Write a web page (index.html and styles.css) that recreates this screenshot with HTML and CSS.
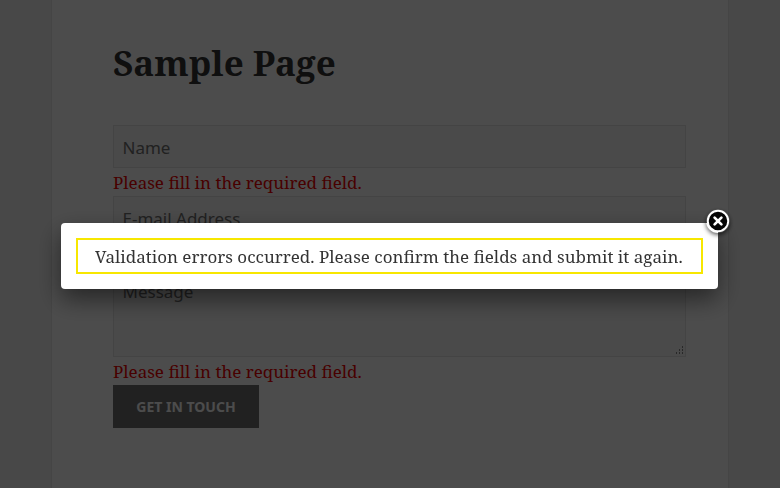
FILE: index.html
```html
<!DOCTYPE html>
<html lang="en">
<head>
<meta charset="utf-8">
<title>Sample Page</title>
<link rel="stylesheet" href="styles.css">
</head>
<body>
<main class="page">
  <h1 class="title">Sample Page</h1>
  <form class="form">
    <input class="field" type="text" placeholder="Name">
    <p class="error">Please fill in the required field.</p>
    <input class="field" type="text" placeholder="E-mail Address">
    <p class="error error-covered"></p>
    <div class="message">
      <textarea class="field area" placeholder="Message"></textarea>
      <svg class="grip" viewBox="0 0 9 9"><path d="M7 1h1M4 4h1M7 4h1M1 7h1M4 7h1M7 7h1" stroke="#888" stroke-width="2"/></svg>
    </div>
    <p class="error">Please fill in the required field.</p>
    <button class="submit" type="button">GET IN TOUCH</button>
  </form>
</main>
<div class="overlay">
  <div class="dialog" role="dialog">
    <p class="notice">Validation errors occurred. Please confirm the fields and submit it again.</p>
    <button class="close" type="button" aria-label="Close">
      <svg viewBox="0 0 24 24"><circle cx="12" cy="12" r="10.2" fill="#050505" stroke="#fff" stroke-width="1.9"/><path d="M8.6 8.6l6.8 6.8M15.4 8.6l-6.8 6.8" stroke="#fff" stroke-width="2.7" stroke-linecap="round"/></svg>
    </button>
  </div>
</div>
</body>
</html>
```
FILE: styles.css
```css
* { box-sizing: border-box; }
body {
  margin: 0;
  height: 488px;
  overflow: hidden;
  background: #f1f1f1;
  color: #333;
  font: 17px/28px "Noto Serif", "DejaVu Serif Condensed", serif;
}
.page {
  width: 678px;
  height: 488px;
  margin-left: 51px;
  padding: 39px 43px 0 61px;
  border: solid #e6e6e6;
  border-width: 0 1px;
  background: #fff;
}
.title { margin: 0 0 38px; font-size: 35px; line-height: 48px; font-weight: 700; }
.form { display: flex; flex-direction: column; align-items: flex-start; }
.field {
  display: block;
  width: 573px;
  height: 43px;
  margin: 0;
  padding: 4px 8.5px 2px;
  border: 1px solid #e4e4e4;
  border-radius: 0;
  background: #f7f7f7;
  font: 17px/24px "Noto Sans", sans-serif;
}
.field::placeholder { color: #707070; opacity: 1; }
.area { height: 90px; padding-top: 12px; resize: none; }
.message { position: relative; }
.grip { position: absolute; right: 2px; bottom: 2px; width: 9px; height: 9px; }
.error { margin: 0; padding-top: 1px; height: 28px; color: #f00000; white-space: nowrap; }
.submit {
  width: 146px;
  height: 43px;
  padding: 0;
  border: 0;
  background: #707070;
  color: #fff;
  font: 700 14px/43px "Noto Sans", sans-serif;
}
.overlay {
  position: fixed;
  inset: 0;
  padding: 223px 0 0 61px;
  background: rgba(0, 0, 0, .7);
}
.dialog {
  position: relative;
  width: 657px;
  height: 66px;
  padding: 15px;
  border-radius: 4px;
  background: #fff;
  box-shadow: 0 10px 25px rgba(0, 0, 0, .5);
}
.notice {
  height: 36px;
  margin: 0;
  padding: 3px 17px;
  border: 2px solid #f7e700;
  line-height: 28px;
  white-space: nowrap;
}
.close {
  position: absolute;
  top: -14px;
  right: -12px;
  width: 24px;
  height: 24px;
  padding: 0;
  border: 0;
  border-radius: 50%;
  background: none;
  box-shadow: 0 2px 4px rgba(0, 0, 0, .6);
}
.close svg { display: block; }
```
